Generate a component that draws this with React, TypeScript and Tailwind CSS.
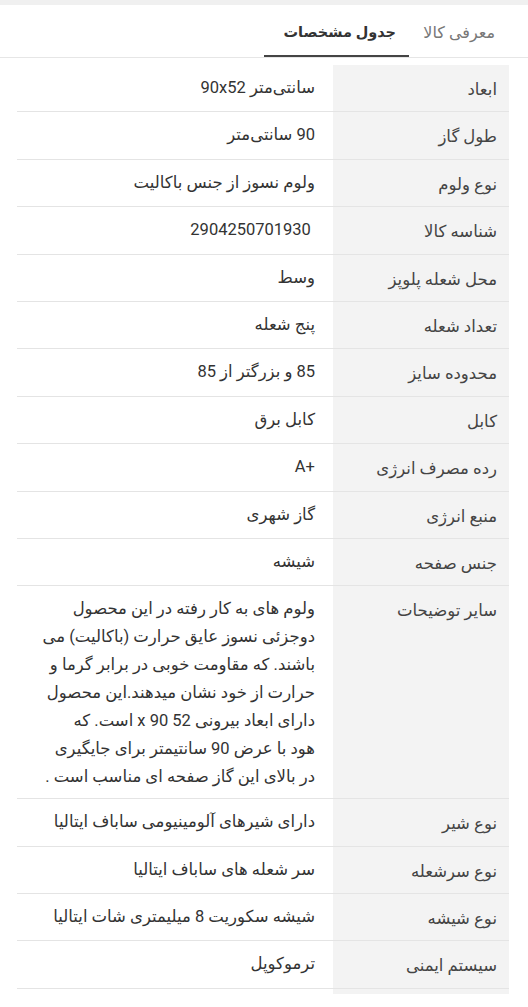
import React from "react";

const specs: { label: string; value: string | string[] }[] = [
  { label: "ابعاد", value: "سانتی‌متر 90x52" },
  { label: "طول گاز", value: "90 سانتی‌متر" },
  { label: "نوع ولوم", value: "ولوم نسوز از جنس باکالیت" },
  { label: "شناسه کالا", value: "\u00A02904250701930" },
  { label: "محل شعله پلوپز", value: "وسط" },
  { label: "تعداد شعله", value: "پنج شعله" },
  { label: "محدوده سایز", value: "85 و بزرگتر از 85" },
  { label: "کابل", value: "کابل برق" },
  { label: "رده مصرف انرژی", value: "A+\u200E" },
  { label: "منبع انرژی", value: "گاز شهری" },
  { label: "جنس صفحه", value: "شیشه" },
  {
    label: "سایر توضیحات",
    value: [
      "ولوم های به کار رفته در این محصول",
      "دوجزئی نسوز عایق حرارت (باکالیت) می",
      "باشند. که مقاومت خوبی در برابر گرما و",
      "حرارت از خود نشان میدهند.این محصول",
      "دارای ابعاد بیرونی 52 90 x است. که",
      "هود با عرض 90 سانتیمتر برای جایگیری",
      "در بالای این گاز صفحه ای مناسب است .",
    ],
  },
  { label: "نوع شیر", value: "دارای شیرهای آلومینیومی ساباف ایتالیا" },
  { label: "نوع سرشعله", value: "سر شعله های ساباف ایتالیا" },
  { label: "نوع شیشه", value: "شیشه سکوریت 8 میلیمتری شات ایتالیا" },
  { label: "سیستم ایمنی", value: "ترموکوپل" },
];

function SpecRow({ label, value }: { label: string; value: string | string[] }) {
  return (
    <div className="flex min-h-[47.4px] border-b border-[#e4e4e4]">
      <div className="w-[176px] shrink-0 bg-[#f3f3f3] pr-[12px] pt-[11px] text-[16.5px] leading-[28px] text-[#444]">
        {label}
      </div>
      <div className="flex-1 pr-[18px] pl-[12px] pt-[9px] pb-[7px] text-[16.5px] leading-[28px] text-[#333]">
        {Array.isArray(value)
          ? value.map((line, i) => (
              <div key={i} className="whitespace-nowrap">
                {line}
              </div>
            ))
          : value}
      </div>
    </div>
  );
}

export default function App() {
  return (
    <div
      dir="rtl"
      className="w-[528px] min-h-[1007px] bg-white"
      style={{ fontFamily: "Roboto, 'DejaVu Sans', sans-serif" }}
    >
      <div className="h-[5px] bg-[#f0f0f0]" />
      <div className="flex h-[53px] items-stretch border-b border-[#e6e6e6] pr-[20px]">
        <button className="px-[13px] pt-[3px] text-[16px] text-[#777]">
          معرفی کالا
        </button>
        <button className="relative mr-[1px] w-[145px] pt-[3px] pl-[6px] text-[14.5px] font-semibold text-[#333]">
          جدول مشخصات
          <span className="absolute bottom-0 left-0 right-0 h-[2px] bg-[#444]" />
        </button>
      </div>
      <div className="mt-[7px] pr-[19px] pl-[17px]">
        {specs.map((s) => (
          <SpecRow key={s.label} label={s.label} value={s.value} />
        ))}
        <div className="h-[5px] w-[176px] bg-[#f3f3f3]" />
      </div>
    </div>
  );
}
